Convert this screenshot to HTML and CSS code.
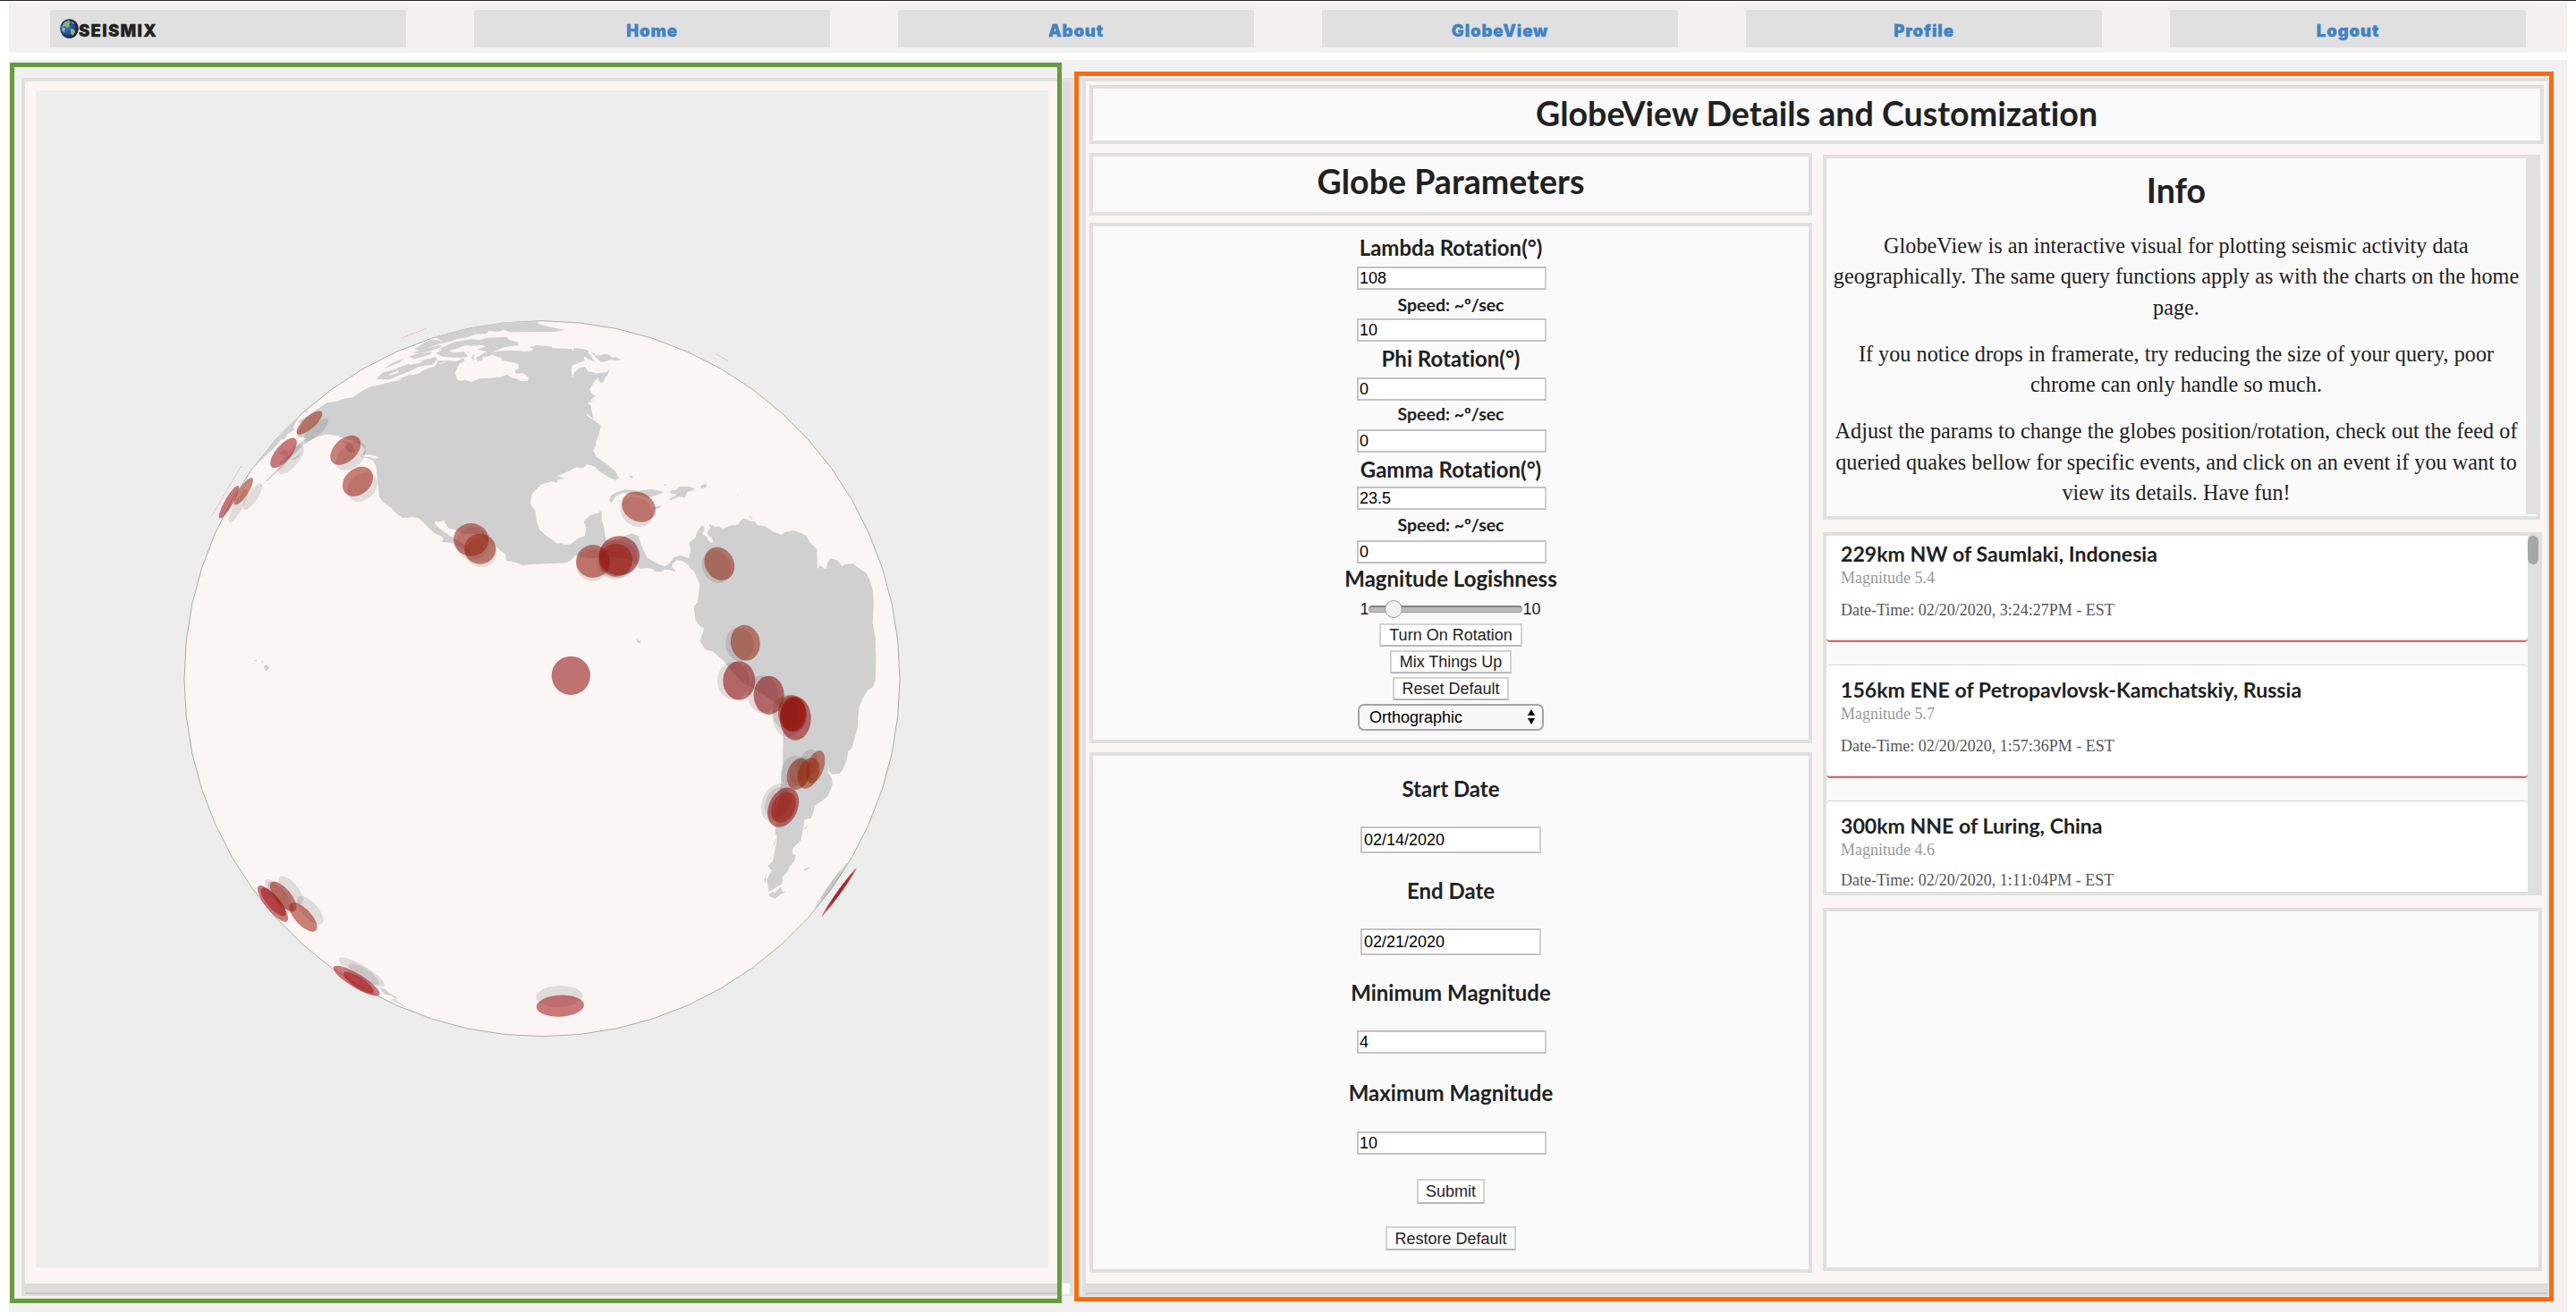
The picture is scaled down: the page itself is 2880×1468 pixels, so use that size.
FILE: index.html
```html
<!DOCTYPE html>
<html lang="en">
<head>
<meta charset="utf-8">
<title>Seismix - GlobeView</title>
<link rel="stylesheet" href="styles.css">
</head>
<body>
<nav class="nav">
  <a class="nav-item brand">
    <svg class="logo" viewBox="0 0 21 22"><defs><radialGradient id="sea" cx=".4" cy=".45" r=".6"><stop offset="0" stop-color="#3f74b4"/><stop offset=".6" stop-color="#234b82"/><stop offset="1" stop-color="#101b2c"/></radialGradient></defs><ellipse cx="10.5" cy="11" rx="10.3" ry="10.8" fill="url(#sea)"/><path d="M5 4l5-2 2 2-2 2 1 3-3 1-3-2-3 1zM12 11l4 1 1 3-3 4-2-3zM13 3l3 2-2 1z" fill="#9cae7c"/><path d="M2 8l4 3-1 5-3-3z" fill="#7fa4c6"/></svg><span>SEISMIX</span>
  </a>
  <a class="nav-item">Home</a>
  <a class="nav-item">About</a>
  <a class="nav-item">GlobeView</a>
  <a class="nav-item">Profile</a>
  <a class="nav-item">Logout</a>
</nav>

<main class="page">
  <section class="panel globe-panel">
    <div class="globe-area">
      <svg class="globe" viewBox="40 101 1132 1316">
        <polygon class="sphere" transform="translate(606 758.7)" points="0,-400 41.8,-397.8 83.2,-391.3 123.6,-380.4 162.7,-365.4 200,-346.4 235.1,-323.6 267.6,-297.3 297.3,-267.6 323.6,-235.1 346.4,-200 365.4,-162.7 380.4,-123.6 391.3,-83.2 397.8,-41.8 400,0 397.8,41.8 391.3,83.2 380.4,123.6 365.4,162.7 346.4,200 323.6,235.1 297.3,267.6 267.6,297.3 235.1,323.6 200,346.4 162.7,365.4 123.6,380.4 83.2,391.3 41.8,397.8 0,400 -41.8,397.8 -83.2,391.3 -123.6,380.4 -162.7,365.4 -200,346.4 -235.1,323.6 -267.6,297.3 -297.3,267.6 -323.6,235.1 -346.4,200 -365.4,162.7 -380.4,123.6 -391.3,83.2 -397.8,41.8 -400,0 -397.8,-41.8 -391.3,-83.2 -380.4,-123.6 -365.4,-162.7 -346.4,-200 -323.6,-235.1 -297.3,-267.6 -267.6,-297.3 -235.1,-323.6 -200,-346.4 -162.7,-365.4 -123.6,-380.4 -83.2,-391.3 -41.8,-397.8"/>
        <g transform="translate(190 340) scale(.33333)">
          <g class="land">
            <!-- North and Central America -->
            <path d="M490 355L527 331 560 326 590 316 612 313 650 288 675 276 705 271 740 261 770 256 800 239 830 235 850 222 890 208 900 190 930 190 960 192 985 180 988 192 970 200 957 230 962 252 975 258 990 254 1010 261 1040 250 1105 246 1130 236 1145 247 1160 249 1175 258 1200 257 1203 247 1185 232 1160 233 1157 224 1170 215 1168 200 1135 193 1115 188 1110 180 1085 172 1080 163 1110 157 1140 155 1190 158 1215 157 1218 149 1204 144 1230 138 1280 142 1283 148 1348 150 1351 158 1354 148 1385 150 1405 157 1402 165 1388 178 1392 190 1375 196 1350 205 1346 220 1350 250 1355 230 1375 213 1392 210 1402 225 1430 232 1465 228 1473 218 1470 235 1458 248 1455 262 1445 265 1436 256 1436 244 1420 265 1408 285 1412 298 1427 308 1415 318 1402 335 1412 340 1415 360 1420 385 1396 366 1400 375 1420 388 1445 407 1441 428 1436 445 1429 460 1428 475 1420 492 1430 512 1470 540 1495 562 1505 582 1495 592 1470 580 1440 560 1425 545 1400 537 1385 550 1360 548 1335 562 1310 572 1297 576 1310 580 1325 585 1300 590 1300 599 1280 595 1245 605 1215 635 1208 668 1226 695 1230 730 1240 757 1260 775 1300 803 1315 802 1320 807 1345 805 1370 785 1392 777 1396 750 1388 728 1410 708 1440 700 1442 693 1448 700 1448 725 1455 745 1460 780 1466 795 1500 790 1535 773 1550 770 1572 778 1578 800 1600 850 1640 873 1660 880 1675 870 1690 850 1710 843 1742 852 1745 880 1720 862 1700 858 1685 872 1683 882 1697 893 1690 898 1675 890 1660 890 1650 898 1625 896 1620 888 1600 885 1575 887 1555 865 1530 852 1480 850 1400 852 1360 842 1347 858 1330 868 1225 872 1180 875 1165 868 1128 860 1126 840 1095 815 1060 790 1020 770 985 770 955 757 935 752 925 738 918 725 905 730 888 728 890 740 920 765 960 790 1000 815 1010 840 950 802 910 797 917 792 913 780 885 767 835 718 812 714 780 718 752 695 740 682 713 662 702 645 697 600 692 545 680 522 640 510 655 490 640 470 600 455 575 443 560 440 520 437 490 447 450 470 420 500 380 543 327 594 322 592 380 535 397 510 410 495 430 470 460 450 430 445 425 430 445 400 430 395Z"/>
            <path d="M280 550L330 488 385 420 433 378 412 415 420 420 395 435 385 452 372 455 350 482 330 500Z"/>
            <path d="M411 520l14-10 14-11-8 15-20 11zM362 500l24-12 12 8-14 12zM565 436l14 6 3-9 5 9 10 1-9 8-18-5zM452 360l14-4-8 9zM303 609l8-4-4 7z"/>
            <path d="M640 507l40 3 30 5-7 8-12-5-10 7-18-9-22-3zM580 460l20 2 15 15 5 25-20-8-14-14 8-5z"/>
            <path class="water" d="M643 506L665 504 700 512 690 520 670 513 645 512Z"/>
            <!-- Arctic islands -->
            <path d="M887 112L990 84 1125 61 1232 58 1237 66 1262 74 1325 87 1290 93 1140 94 1120 86 1100 93 1070 90 1062 100 1025 101 1000 110 960 118 940 126 900 134 915 124Z"/>
            <path d="M820 150L875 118 910 122 905 132 870 145 842 158ZM812 163L850 152 900 138 915 142 880 155 835 166ZM1060 113L1130 110 1138 120 1165 127 1170 137 1120 145 1090 158 1080 170 1060 178 1040 172 1062 160 1030 152 1060 142 1048 138 1005 140 1000 132 1020 128ZM905 150L950 128 1010 118 1050 122 1040 132 985 140 960 150 925 158ZM893 165L920 150 950 163 985 160 1000 175 975 180 940 178 915 176ZM718 216L745 198 785 182 770 196 735 210ZM692 252L712 230 752 220 800 200 860 185 890 178 898 186 880 203 840 208 800 227 770 238 740 252 712 253ZM800 175L840 165 880 160 870 170 820 184ZM1010 180L1020 168 1018 190ZM1028 178l22-7-2 18-18 2zM760 255l50-22-10 12zM1378 150l30 18 18 26-20-8-20-14z"/>
            <path class="water" d="M800 195L850 190 840 197 805 203ZM735 235L770 222 765 230 738 240ZM1000 158L1050 160 1030 168 1005 166ZM900 200L930 192 910 202Z"/>
            <path d="M1410 160L1425 167 1430 173 1460 168 1475 170 1480 180 1495 178 1515 186 1495 190 1480 186 1455 194 1445 194 1430 180ZM1410 326l10-5-12 12z"/>
            <!-- Caribbean -->
            <path d="M1473 660L1480 642 1500 630 1530 622 1570 626 1615 620 1650 628 1655 632 1630 642 1600 650 1570 640 1520 632 1495 645 1482 666ZM1683 623L1695 625 1710 612 1740 612 1760 618 1755 625 1735 630 1727 650 1710 645 1680 658 1672 654 1700 640 1675 633ZM1620 682l28-6-5 8-20 6zM1780 610l15-7 7 4-5 9-14 3zM1542 573l10 5 0 8-8-5zM1657 606l8-2-2 5zM1500 660l8-3 2 6zM1901 638l6 2-3 2zM1942 710l8 3 4 10-7-5z"/>
            <!-- South America -->
            <path d="M1742 850L1746 825 1742 800 1762 783 1768 765 1782 745 1792 745 1793 755 1785 770 1803 782 1803 790 1815 801 1822 795 1818 785 1805 775 1802 765 1812 750 1808 738 1830 748 1840 745 1855 753 1885 742 1905 740 1915 725 1925 718 1945 728 1962 730 1970 742 1995 745 2025 764 2050 774 2065 764 2090 760 2115 767 2135 778 2145 798 2170 822 2171 860 2172 888 2180 875 2195 888 2203 885 2205 870 2215 852 2240 860 2255 880 2265 872 2290 870 2320 892 2334 900 2345 920 2358 960 2360 1010 2357 1070 2366 1120 2368 1190 2366 1262 2358 1285 2340 1295 2325 1320 2312 1350 2308 1380 2307 1420 2298 1450 2287 1490 2275 1500 2270 1530 2255 1565 2245 1575 2220 1577 2211 1565 2211 1545 2208 1572 2220 1592 2222 1612 2207 1650 2185 1668 2162 1682 2158 1705 2150 1725 2128 1728 2125 1752 2115 1800 2090 1825 2087 1842 2100 1850 2095 1865 2080 1885 2070 1905 2055 1920 2053 1945 2020 1965 2008 1970 2003 1930 2018 1900 2005 1885 2022 1868 2028 1840 2035 1800 2035 1780 2030 1782 2032 1720 2045 1640 2055 1550 2057 1460 2055 1400 2040 1345 2000 1315 1950 1285 1920 1270 1880 1225 1855 1195 1820 1165 1795 1158 1778 1130 1792 1085 1780 1083 1763 1060 1757 1015 1770 1000 1777 940 1760 900 1742 882Z"/>
            <path d="M1995 1930l5-20-3 35zM2025 1812l7-20-2 18-6 10zM2128 1758l10-10-2 8-8 8zM2005 1982l18-12 4 6 22-22 5 18 14-2-16 8-22 16-12-4z"/>
            <path d="M2126 1895l22-8-10 10-10 4zM285 1193h6v5h-6zM305 1197h8l-2 6zM316 1213l8-5 9 12-11 12-5-8zM1563 1120l8 8 8 2-2 8-8-2z"/>
            <path d="M702 2293l20 4 12 13 30 17-12 4 40 28 40 18 15 6-40-15-40-22-25-14 20 0-20-12-20-4z"/>
          </g>
          <g class="shadows">
            <ellipse rx="53" ry="19" transform="translate(490 422) rotate(-42)"/>
            <ellipse rx="61" ry="25" transform="translate(406 521) rotate(-50)"/>
            <ellipse rx="62" ry="15" transform="translate(229 678) rotate(-61)"/>
            <ellipse rx="52" ry="17" transform="translate(277 646) rotate(-56)"/>
            <ellipse rx="59" ry="38" transform="translate(607 510) rotate(-43)"/>
            <ellipse rx="56" ry="43" transform="translate(645 613) rotate(-42)"/>
            <ellipse cx="1015" cy="804" rx="56" ry="54"/><ellipse cx="1044" cy="833" rx="52" ry="49"/>
            <ellipse rx="57" ry="47" transform="translate(1565 697) rotate(30)"/>
            <ellipse cx="1418" cy="876" rx="56" ry="53"/><ellipse cx="1500" cy="856" rx="66" ry="63"/><ellipse cx="1492" cy="870" rx="55" ry="53"/>
            <ellipse rx="57" ry="47" transform="translate(1833 881) rotate(60)"/>
            <ellipse rx="57" ry="48" transform="translate(1911 1141) rotate(80)"/>
            <ellipse cx="1890" cy="1263" rx="54" ry="64"/><ellipse cx="1988" cy="1308" rx="51" ry="64"/>
            <ellipse cx="2066" cy="1368" rx="46" ry="57"/><ellipse cx="2073" cy="1382" rx="51" ry="71"/>
            <ellipse rx="39" ry="55" transform="translate(2089 1567) rotate(18)"/><ellipse rx="31" ry="55" transform="translate(2138 1546) rotate(20)"/><ellipse rx="35" ry="50" transform="translate(2115 1567) rotate(20)"/>
            <ellipse rx="48" ry="67" transform="translate(2034 1673) rotate(25)"/><ellipse rx="38" ry="54" transform="translate(2036 1672) rotate(25)"/>
            <ellipse rx="95" ry="7" transform="translate(2216 1952) rotate(-54.5)"/><ellipse rx="58" ry="6" transform="translate(2218 1950) rotate(-54.5)"/>
            <ellipse rx="78" ry="36" transform="translate(1306 2322) rotate(-2)"/>
            <ellipse rx="58" ry="25" transform="translate(405 1966) rotate(50)"/><ellipse rx="60" ry="26" transform="translate(470 2033) rotate(48)"/><ellipse rx="72" ry="22" transform="translate(367 1987) rotate(51)"/><ellipse rx="60" ry="20" transform="translate(370 1985) rotate(50)"/>
            <ellipse rx="89" ry="22" transform="translate(643 2241) rotate(31)"/><ellipse rx="59" ry="19" transform="translate(650 2247) rotate(33)"/>
          </g>
          <g class="quakes">
            <ellipse class="low" rx="55" ry="20" transform="translate(468 398) rotate(-42)"/>
            <ellipse class="high" rx="62" ry="26" transform="translate(381 499) rotate(-50)"/>
            <ellipse class="high" rx="62" ry="14" transform="translate(198 664) rotate(-60)"/>
            <ellipse class="low" rx="53" ry="16" transform="translate(247 628) rotate(-57)"/>
            <ellipse class="mid" rx="60" ry="38" transform="translate(589 490) rotate(-43)"/>
            <ellipse class="mid" rx="57" ry="43" transform="translate(630 595) rotate(-42)"/>
            <ellipse class="mid" cx="1010" cy="790" rx="59" ry="55"/><ellipse class="low" cx="1040" cy="821" rx="53" ry="51"/>
            <ellipse class="mid" rx="59" ry="48" transform="translate(1572 680) rotate(30)"/>
            <ellipse class="mid" cx="1419" cy="863" rx="57" ry="55"/><ellipse class="deep" cx="1507" cy="844" rx="68" ry="66"/><ellipse class="mid" cx="1496" cy="859" rx="56" ry="55"/>
            <ellipse class="low" rx="58" ry="48" transform="translate(1843 871) rotate(60)"/>
            <ellipse class="low" rx="60" ry="49" transform="translate(1930 1136) rotate(80)"/>
            <ellipse class="deep" cx="1909" cy="1263" rx="54" ry="65"/><ellipse class="deep" cx="2009" cy="1312" rx="51" ry="65"/>
            <ellipse class="low" cx="2086" cy="1371" rx="46" ry="60"/><ellipse class="mid" cx="2091" cy="1376" rx="45" ry="59"/><ellipse class="deep" cx="2098" cy="1390" rx="52" ry="73"/>
            <ellipse class="low" rx="37" ry="54" transform="translate(2108 1576) rotate(18)"/><ellipse class="low" rx="34" ry="54" transform="translate(2142 1573) rotate(20)"/><ellipse class="low" rx="28" ry="57" transform="translate(2165 1552) rotate(18)"/>
            <ellipse class="deep" rx="48" ry="70" transform="translate(2057 1688) rotate(25)"/><ellipse class="mid" rx="38" ry="54" transform="translate(2058 1688) rotate(25)"/>
            <ellipse class="high" rx="99" ry="6" transform="translate(2245 1972) rotate(-54.3)"/><ellipse class="high" rx="78" ry="6" transform="translate(2246 1970) rotate(-54.3)"/><ellipse class="high" rx="50" ry="5" transform="translate(2246 1970) rotate(-54.3)"/>
            <ellipse class="high" rx="80" ry="36" transform="translate(1309 2354) rotate(-3)"/>
            <ellipse class="high" rx="76" ry="24" transform="translate(345 2011) rotate(51)"/><ellipse class="high" rx="60" ry="21" transform="translate(347 2005) rotate(49)"/><ellipse class="mid" rx="62" ry="26" transform="translate(380 1987) rotate(50)"/><ellipse class="mid" rx="62" ry="27" transform="translate(447 2056) rotate(47)"/>
            <ellipse class="high" rx="90" ry="23" transform="translate(626 2270) rotate(31)"/><ellipse class="high" rx="60" ry="18" transform="translate(633 2276) rotate(33)"/>
            <circle class="deep" cx="1345" cy="1246" r="65"/>
            <path class="edge" d="M142 707L238 545M780 113L860 82M1833 168L1875 192"/>
          </g>
        </g>
      </svg>
    </div>
    <div class="track-y"></div>
    <div class="track-x"></div>
    <div class="track-corner"></div>
  </section>

  <section class="panel detail-panel">
    <div class="detail-body">
      <h1 class="box title">GlobeView Details and Customization</h1>
      <div class="columns">
        <div class="col-left">
          <h2 class="box subtitle">Globe Parameters</h2>
          <form class="box params">
            <label class="name">Lambda Rotation(°)</label>
            <input type="text" value="108">
            <label class="speed">Speed: ~º/sec</label>
            <input type="text" value="10">
            <label class="name">Phi Rotation(°)</label>
            <input type="text" value="0">
            <label class="speed">Speed: ~º/sec</label>
            <input type="text" value="0">
            <label class="name">Gamma Rotation(°)</label>
            <input type="text" value="23.5">
            <label class="speed">Speed: ~º/sec</label>
            <input type="text" value="0">
            <label class="name">Magnitude Logishness</label>
            <div class="slider"><span>1</span><div class="rail"><i class="thumb"></i></div><span>10</span></div>
            <button type="button" class="w-turn">Turn On Rotation</button>
            <button type="button" class="w-mix">Mix Things Up</button>
            <button type="button" class="w-reset">Reset Default</button>
            <div class="select"><span>Orthographic</span><svg viewBox="0 0 10 18"><path d="M5 0l4 7H1zM5 17l4-7H1z"/></svg></div>
          </form>
          <form class="box dates">
            <label class="name">Start Date</label>
            <input type="text" class="date" value="02/14/2020">
            <label class="name">End Date</label>
            <input type="text" class="date" value="02/21/2020">
            <label class="name">Minimum Magnitude</label>
            <input type="text" value="4">
            <label class="name">Maximum Magnitude</label>
            <input type="text" value="10">
            <button type="button" class="w-submit">Submit</button>
            <button type="button" class="w-restore">Restore Default</button>
          </form>
        </div>
        <div class="col-right">
          <article class="box info">
            <div class="info-text">
              <h2>Info</h2>
              <p>GlobeView is an interactive visual for plotting seismic activity data<br>geographically. The same query functions apply as with the charts on the home<br>page.</p>
              <p>If you notice drops in framerate, try reducing the size of your query, poor<br>chrome can only handle so much.</p>
              <p>Adjust the params to change the globes position/rotation, check out the feed of<br>queried quakes bellow for specific events, and click on an event if you want to<br>view its details. Have fun!</p>
            </div>
            <div class="info-track"></div>
          </article>
          <div class="box feed">
            <div class="feed-list">
              <div class="card"><h3>229km NW of Saumlaki, Indonesia</h3><p class="mag">Magnitude 5.4</p><p class="when">Date-Time: 02/20/2020, 3:24:27PM - EST</p></div>
              <div class="card"><h3>156km ENE of Petropavlovsk-Kamchatskiy, Russia</h3><p class="mag">Magnitude 5.7</p><p class="when">Date-Time: 02/20/2020, 1:57:36PM - EST</p></div>
              <div class="card last"><h3>300km NNE of Luring, China</h3><p class="mag">Magnitude 4.6</p><p class="when">Date-Time: 02/20/2020, 1:11:04PM - EST</p></div>
            </div>
            <div class="feed-track"><i></i></div>
          </div>
          <div class="box empty"></div>
        </div>
      </div>
    </div>
    <div class="track-x"></div>
  </section>
  <div class="outline green"></div>
  <div class="outline orange"></div>
</main>
</body>
</html>
```
FILE: styles.css
```css
* { box-sizing: border-box; }
body {
  margin: 0; height: 1468px; overflow: hidden; padding: 2px 10px 0;
  border-top: 1px solid #2a2226; background: #fff; color: #212121;
}
h1, h2, h3, p { margin: 0; }

.nav {
  height: 56px; padding: 8px 46px 0; background: #f2f1ef;
  display: grid; grid-template-columns: repeat(6, 398px); column-gap: 76px;
}
.nav-item {
  height: 42px; background: #e0e0e0; color: #4183c4;
  font: 900 18.5px/47px Inter, "Liberation Sans", sans-serif; text-align: center;
  letter-spacing: .9px; -webkit-text-stroke: .3px currentColor;
}
.brand { display: flex; align-items: center; padding: 4px 0 0 11px; color: #222; line-height: 40px; letter-spacing: 1.3px; }
.logo { width: 21px; height: 22px; margin-top: -4px; }

.page {
  position: relative; margin-top: 8px; height: 1400px; padding: 20px 0 0 14px;
  background: #f2f1ef; display: flex; gap: 10px; align-items: flex-start;
}
.panel { height: 1362px; border: 4px solid #e0e0e0; border-bottom-width: 2px; background: #fbf5f4; }
.globe-panel {
  width: 1176px; display: grid;
  grid-template: 1344px 12px / 1156px 12px;
}
.globe-area { padding: 10px 12px 18px; }
.globe { display: block; width: 1132px; height: 1316px; background: #eeedee; }
.track-y { background: #dfdcdb; }
.track-x { height: 12px; background: #dfdbda; border-bottom: 2px solid #c6c6c6; }
.track-corner { background: #fff; }

.sphere { fill: #fbf5f4; stroke: #adadab; stroke-width: 1; }
.land { fill: #d0d0d0; }
.water { fill: #fbf5f4; }
.shadows { fill: rgba(0, 0, 0, .1); }
.high { fill: rgba(160, 18, 22, .55); }
.mid { fill: rgba(156, 30, 16, .55); }
.deep { fill: rgba(142, 6, 8, .55); }
.low { fill: rgba(150, 38, 12, .55); }
.edge { stroke: #b5302e; stroke-width: 2; stroke-dasharray: 4 4; opacity: .6; fill: none; }

.detail-panel { width: 1642px; }
.detail-body { height: 1344px; padding: 4px 4px 0; }
.box { border: 4px solid #e0e0e0; background: #fafafa; }
.title, .subtitle, .info h2 {
  font: 700 37.6px/46px Lato, sans-serif; text-align: center;
  font-variant-ligatures: none;
}
.title { width: 1626px; height: 66px; padding-top: 5px; }
.columns { display: flex; gap: 12px; padding-top: 10px; }
.col-left { width: 808px; display: flex; flex-direction: column; }
.subtitle { height: 70px; padding-top: 5px; }
.params, .dates { display: grid; justify-items: center; align-items: start; align-content: start; }
.params {
  height: 582px; margin-top: 8px; padding-top: 10px;
  grid-template-rows: 35px 31px 27px 31px 35px 29px 29px 31px 33px 31px 29px 29px 36px 28px 30px 30px 30px 30px;
}
.dates {
  height: 582px; margin-top: 10px; padding-top: 23px;
  grid-template-rows: 56px 58px 56px 58px 56px 56px 57px 53px 53px 27px;
}
.name { font: 700 24px/28px Lato, sans-serif; font-variant-ligatures: none; }
.speed { font: 700 19.5px/24px Lato, sans-serif; }
input {
  width: 212px; height: 26px; margin: 0 0 0 2px; padding: 0 1px; border: 2px solid #c3c3c3; border-right-color: #d0d0d0;
  background: #fff; color: #000; font: 18px "Liberation Sans", sans-serif;
}
input.date { width: 202px; height: 30px; margin: 0; padding: 0 2px; }
button {
  height: 26px; padding: 0; border: 2px solid #d2d2d2; border-bottom-color: #b8b8b8;
  background: #fff; color: #222; font: 18px/20px "Liberation Sans", sans-serif;
}
.w-turn { width: 160px; }
.w-mix { width: 136px; }
.w-reset { width: 130px; }
.w-submit { width: 76px; height: 28px; }
.w-restore { width: 146px; height: 27px; }
.slider { display: flex; align-items: center; height: 24px; padding-left: 8px; font: 18px/24px "Liberation Sans", sans-serif; }
.slider span:first-child { margin-left: -10px; }
.slider span:last-child { margin-right: -1px; }
.rail {
  position: relative; width: 172px; height: 8px; border-radius: 4px;
  border: 1px solid #999; border-top: 2px solid #808080; background: #bbb;
}
.thumb {
  position: absolute; left: 17px; top: -8px; width: 20px; height: 20px;
  border: 1.5px solid #999; border-radius: 50%; background: #f2f2f2;
}
.select {
  width: 208px; height: 30px; padding: 0 7px 0 11px; border: 2px solid #a5a5a5; border-radius: 7px;
  background: #f8f8f8; color: #000; font: 18px/26px "Liberation Sans", sans-serif;
  display: flex; justify-content: space-between; align-items: center;
}
.select svg { width: 10px; height: 18px; }

.col-right { width: 804px; padding-top: 2px; }
.info { width: 802px; height: 408px; display: flex; }
.info-text { width: 782px; padding-top: 13px; text-align: center; }
.info p { font: 24.25px/34.3px "Liberation Serif", serif; margin-bottom: 18px; }
.info h2 { margin-bottom: 22px; }
.info-track { width: 12px; height: 398px; background: #e0e0e0; }
.feed { height: 406px; margin-top: 14px; display: flex; overflow: hidden; }
.feed-list { width: 784px; height: 398px; overflow: hidden; }
.card {
  height: 127px; margin-bottom: 25px; padding: 12px 0 0 16px; background: #fff;
  border-top: 1px solid #d4d4d5; border-bottom: 2px solid #e06468; border-radius: 4px;
  box-shadow: inset 0 -1px 0 #d4d4d5;
}
.card:first-child { height: 119px; padding-top: 4px; border-top-color: #fff; }
.card h3 { font: 700 23.1px/30px Lato, sans-serif; margin-bottom: 1px; }
.mag { font: 18px/22px "Liberation Serif", serif; color: #999; }
.when { margin-top: 14px; font: 18px/22px "Liberation Serif", serif; color: #555; }
.last .when { margin-top: 12px; }
.feed-track { width: 12px; background: #e0e0e0; }
.feed-track i { display: block; width: 12px; height: 32px; border-radius: 6px; background: #a8a8a8; }
.empty { height: 406px; margin-top: 14px; }

/* Highlight frames laid over the two panels */
.outline { position: absolute; border: 5px solid; pointer-events: none; }
.green { left: 1px; top: 3px; width: 1176px; height: 1387px; border-color: #669c3d; }
.orange { left: 1191px; top: 13px; width: 1654px; height: 1375px; border-color: #ff6a10; }
```
